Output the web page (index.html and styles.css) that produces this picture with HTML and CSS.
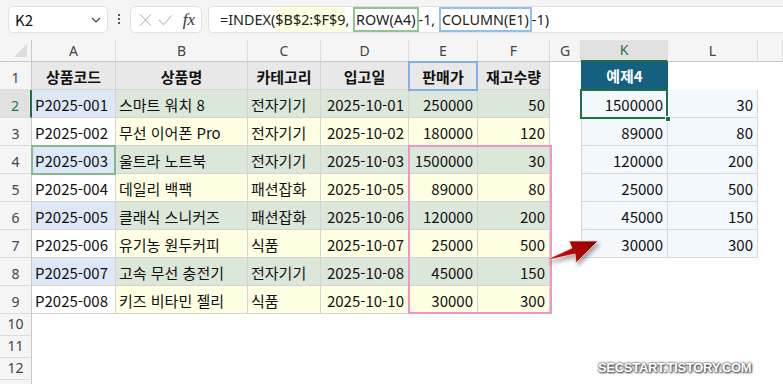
FILE: index.html
```html
<!DOCTYPE html>
<html lang="ko">
<head>
  <meta charset="UTF-8">
  <title>INDEX 예제4</title>
  <link rel="stylesheet" href="styles.css">
</head>
<body>
  <header class="toolbar">
    <div class="namebox">
      <span>K2</span>
      <svg class="chev" width="10" height="6" viewBox="0 0 10 6"><path d="M1 1l4 4 4-4" fill="none" stroke="#444" stroke-width="1.2"/></svg>
    </div>
    <div class="dots"><i></i><i></i><i></i></div>
    <div class="fxbox">
      <svg width="14" height="14" viewBox="0 0 14 14"><path d="M1 1l12 12M13 1L1 13" stroke="#c4c4c4" stroke-width="1.2"/></svg>
      <svg width="16" height="12" viewBox="0 0 16 12"><path d="M1 6l5 5 9-10" fill="none" stroke="#c4c4c4" stroke-width="1.2"/></svg>
      <span class="fx">fx</span>
    </div>
    <div class="formula">
      <span>=INDEX(</span><span class="ref-y">$B$2:$F$9</span><span>,&nbsp;</span><span class="ref-g">ROW(A4)</span><span>-1,&nbsp;</span><span class="ref-b">COLUMN(E1)</span><span>-1)</span>
    </div>
  </header>

  <main class="sheet-wrap">
    <div class="sheet">
      <!-- column headers -->
      <div class="corner"><i></i></div>
      <div class="ch">A</div><div class="ch">B</div><div class="ch">C</div><div class="ch">D</div>
      <div class="ch">E</div><div class="ch">F</div><div class="ch">G</div><div class="ch on">K</div>
      <div class="ch">L</div><div class="ch"></div>

      <div class="rh">1</div>
      <div class="c t">상품코드</div><div class="c t">상품명</div><div class="c t">카테고리</div><div class="c t">입고일</div>
      <div class="c t">판매가</div><div class="c t">재고수량</div><div></div><div class="xh">예제4</div><div></div><div></div>

      <div class="rh on">2</div>
      <div class="c b">P2025-001</div><div class="c g">스마트 워치 8</div><div class="c g">전자기기</div><div class="c g r">2025-10-01</div>
      <div class="c g r">250000</div><div class="c g r">50</div><div></div><div class="x k r">1500000</div><div class="x r">30</div><div></div>

      <div class="rh">3</div>
      <div class="c w">P2025-002</div><div class="c y">무선 이어폰 Pro</div><div class="c y">전자기기</div><div class="c y r">2025-10-02</div>
      <div class="c y r">180000</div><div class="c y r">120</div><div></div><div class="x k r">89000</div><div class="x r">80</div><div></div>

      <div class="rh">4</div>
      <div class="c b">P2025-003</div><div class="c g">울트라 노트북</div><div class="c g">전자기기</div><div class="c g r">2025-10-03</div>
      <div class="c g r">1500000</div><div class="c g r">30</div><div></div><div class="x k r">120000</div><div class="x r">200</div><div></div>

      <div class="rh">5</div>
      <div class="c w">P2025-004</div><div class="c y">데일리 백팩</div><div class="c y">패션잡화</div><div class="c y r">2025-10-05</div>
      <div class="c y r">89000</div><div class="c y r">80</div><div></div><div class="x k r">25000</div><div class="x r">500</div><div></div>

      <div class="rh">6</div>
      <div class="c b">P2025-005</div><div class="c g">클래식 스니커즈</div><div class="c g">패션잡화</div><div class="c g r">2025-10-06</div>
      <div class="c g r">120000</div><div class="c g r">200</div><div></div><div class="x k r">45000</div><div class="x r">150</div><div></div>

      <div class="rh">7</div>
      <div class="c w">P2025-006</div><div class="c y">유기농 원두커피</div><div class="c y">식품</div><div class="c y r">2025-10-07</div>
      <div class="c y r">25000</div><div class="c y r">500</div><div></div><div class="x k r">30000</div><div class="x r">300</div><div></div>

      <div class="rh">8</div>
      <div class="c b">P2025-007</div><div class="c g">고속 무선 충전기</div><div class="c g">전자기기</div><div class="c g r">2025-10-08</div>
      <div class="c g r">45000</div><div class="c g r">150</div><div></div><div></div><div></div><div></div>

      <div class="rh">9</div>
      <div class="c w">P2025-008</div><div class="c y">키즈 비타민 젤리</div><div class="c y">식품</div><div class="c y r">2025-10-10</div>
      <div class="c y r">30000</div><div class="c y r">300</div><div></div><div></div><div></div><div></div>

      <div class="rh">10</div><div></div><div></div><div></div><div></div><div></div><div></div><div></div><div></div><div></div><div></div>
      <div class="rh">11</div><div></div><div></div><div></div><div></div><div></div><div></div><div></div><div></div><div></div><div></div>
      <div class="rh">12</div><div></div><div></div><div></div><div></div><div></div><div></div><div></div><div></div><div></div><div></div>
      <div class="rh"></div>
    </div>

    <!-- highlight frames drawn over the grid -->
    <div class="marks">
      <div class="mk-e1"></div>
      <div class="mk-a4"></div>
      <div class="mk-range"></div>
      <div class="mk-k2"><i></i></div>
    </div>

    <svg class="arrow" width="64" height="36" viewBox="0 0 64 36">
      <defs>
        <linearGradient id="ar" x1="0" y1="1" x2="1" y2="0">
          <stop offset="0" stop-color="#d31010"/>
          <stop offset="1" stop-color="#8e0000"/>
        </linearGradient>
      </defs>
      <polygon points="3,26 27,15 24,8 53,8 31,30 30,21 3,27" fill="url(#ar)" stroke="#f4dede" stroke-width="0.8"/>
    </svg>

    <div class="stamp">SECSTART.TISTORY.COM</div>
  </main>
</body>
</html>
```

FILE: styles.css
```css
:root {
  --grid-line: #d4d4d4;
  --head-bg: #f5f5f5;
  --sel-green: #1e7145;
  --cols: 32px 84px 132px 73px 88px 69px 72px 31px 87px 90px 1fr;
  --rows: 22px repeat(9, 28px) repeat(4, 22px);
}
* {
  box-sizing: border-box;
}
body {
  margin: 0;
  width: 783px;
  height: 384px;
  overflow: hidden;
  background: #fff;
  font-family: "Noto Sans CJK KR", "Noto Sans", sans-serif;
  color: #111;
}

/* formula bar */
.toolbar {
  height: 40px;
  background: var(--head-bg);
  display: flex;
  align-items: flex-start;
  padding: 6px 0 0 8px;
}
.namebox, .fxbox, .formula {
  height: 27px;
  background: #fff;
  border: 1px solid #e1e1e1;
  border-radius: 5px;
  display: flex;
  align-items: center;
}
.namebox {
  width: 100px;
  justify-content: space-between;
  padding: 0 6px 0 6px;
  font-size: 15px;
}
.dots {
  width: 22px;
  display: flex;
  flex-direction: column;
  align-items: center;
  gap: 2px;
  padding-top: 8px;
}
.dots i {
  width: 2px;
  height: 2px;
  background: #555;
}
.fxbox {
  width: 72px;
  padding: 0 6px 0 8px;
  gap: 6px;
}
.fx {
  font-family: "Liberation Serif", serif;
  font-style: italic;
  font-size: 17px;
  margin-left: 4px;
  color: #333;
}
.formula {
  flex: 1;
  margin-left: 6px;
  border-right: none;
  border-radius: 5px 0 0 5px;
  padding-left: 11px;
  align-items: stretch;
  font-family: "Noto Sans", sans-serif;
  font-size: 14.4px;
  color: #222;
}
.formula span {
  display: flex;
  align-items: center;
}
.ref-y {
  background: #fdfde1;
}
.ref-g {
  border: 2px solid #93c295;
  padding: 0 1px;
}
.ref-b {
  border: 2px solid #93bfee;
  padding: 0 1px;
}

/* sheet grid */
.sheet-wrap {
  display: grid;
  position: relative;
}
.sheet-wrap > .sheet, .sheet-wrap > .marks {
  grid-area: 1 / 1;
}
.sheet, .marks {
  display: grid;
  grid-template-columns: var(--cols);
  grid-template-rows: var(--rows);
}
.sheet {
  font-size: 15px;
  line-height: 20px;
}
.corner {
  background: var(--head-bg);
  border-right: 1px solid #c8c8c8;
  border-bottom: 1px solid #c8c8c8;
  display: flex;
  justify-content: flex-end;
  align-items: flex-end;
  padding: 0 4px 4px 0;
}
.corner i {
  width: 13px;
  height: 13px;
  background: #dcdcdc;
  clip-path: polygon(100% 0, 100% 100%, 0 100%);
}
.ch {
  background: var(--head-bg);
  border-right: 1px solid #dcdcdc;
  border-bottom: 1px solid #c8c8c8;
  font-family: "Noto Sans", sans-serif;
  font-size: 14px;
  color: #444;
  display: flex;
  justify-content: center;
  align-items: center;
}
.ch.on {
  background: #e1e1e1;
  color: #217346;
  border-bottom: 2px solid var(--sel-green);
}
.rh {
  background: var(--head-bg);
  border-right: 1px solid #c8c8c8;
  border-bottom: 1px solid #dcdcdc;
  font-family: "Noto Sans", sans-serif;
  font-size: 14px;
  color: #444;
  display: flex;
  justify-content: center;
  align-items: flex-end;
  padding-bottom: 1px;
}
.rh.on {
  background: #e1e1e1;
  color: #217346;
  border-right: 2px solid var(--sel-green);
}
.c {
  border-right: 1px solid var(--grid-line);
  border-bottom: 1px solid var(--grid-line);
  display: flex;
  align-items: center;
  padding: 2px 3px 0;
  white-space: nowrap;
  overflow: hidden;
}
.t {
  background: #e8e8e8;
  font-weight: bold;
  justify-content: center;
}
.b { background: #dde8f6; }
.w { background: #fff; }
.g { background: #dbe7d8; }
.y { background: #fefee3; }
.r {
  justify-content: flex-end;
  padding-right: 4px;
}

/* example result block */
.xh {
  background: #155f80;
  color: #fff;
  font-weight: bold;
  display: flex;
  justify-content: center;
  align-items: center;
}
.x {
  background: #f3f8fd;
  border-right: 1px solid #d3d9e1;
  border-bottom: 1px solid #d3d9e1;
  display: flex;
  align-items: center;
  padding: 2px 4px 0;
}
.x.k {
  border-left: 1px solid #d3d9e1;
}

/* highlight frames */
.marks {
  pointer-events: none;
}
.mk-e1 {
  grid-column: 6;
  grid-row: 2;
  border: 2px solid #7fb1e8;
  margin: -1px 0 -1px -1px;
}
.mk-a4 {
  grid-column: 2;
  grid-row: 5;
  border: 2px solid #86b98a;
  margin: -1px 0 -1px -1px;
}
.mk-range {
  grid-column: 6 / 8;
  grid-row: 5 / 11;
  border: 2px solid #f295c2;
  margin: -1px -2px 0 -1px;
}
.mk-k2 {
  grid-column: 9;
  grid-row: 3;
  border: 2px solid var(--sel-green);
  margin: -1px 0 -1px -1px;
  position: relative;
}
.mk-k2 i {
  position: absolute;
  right: -5px;
  bottom: -5px;
  width: 6px;
  height: 6px;
  background: var(--sel-green);
  border: 1px solid #fff;
}

/* overlays */
.arrow {
  position: absolute;
  left: 545px;
  top: 193px;
  filter: drop-shadow(2px 3px 2px rgba(0, 0, 0, 0.35));
}
.stamp {
  position: absolute;
  left: 598px;
  top: 320px;
  font-family: "Liberation Sans", sans-serif;
  font-weight: bold;
  font-size: 13px;
  letter-spacing: -0.3px;
  color: #fff;
  text-shadow: 0 0 2px #555, 1px 1px 2px #444, 0 0 3px #777;
}
```
